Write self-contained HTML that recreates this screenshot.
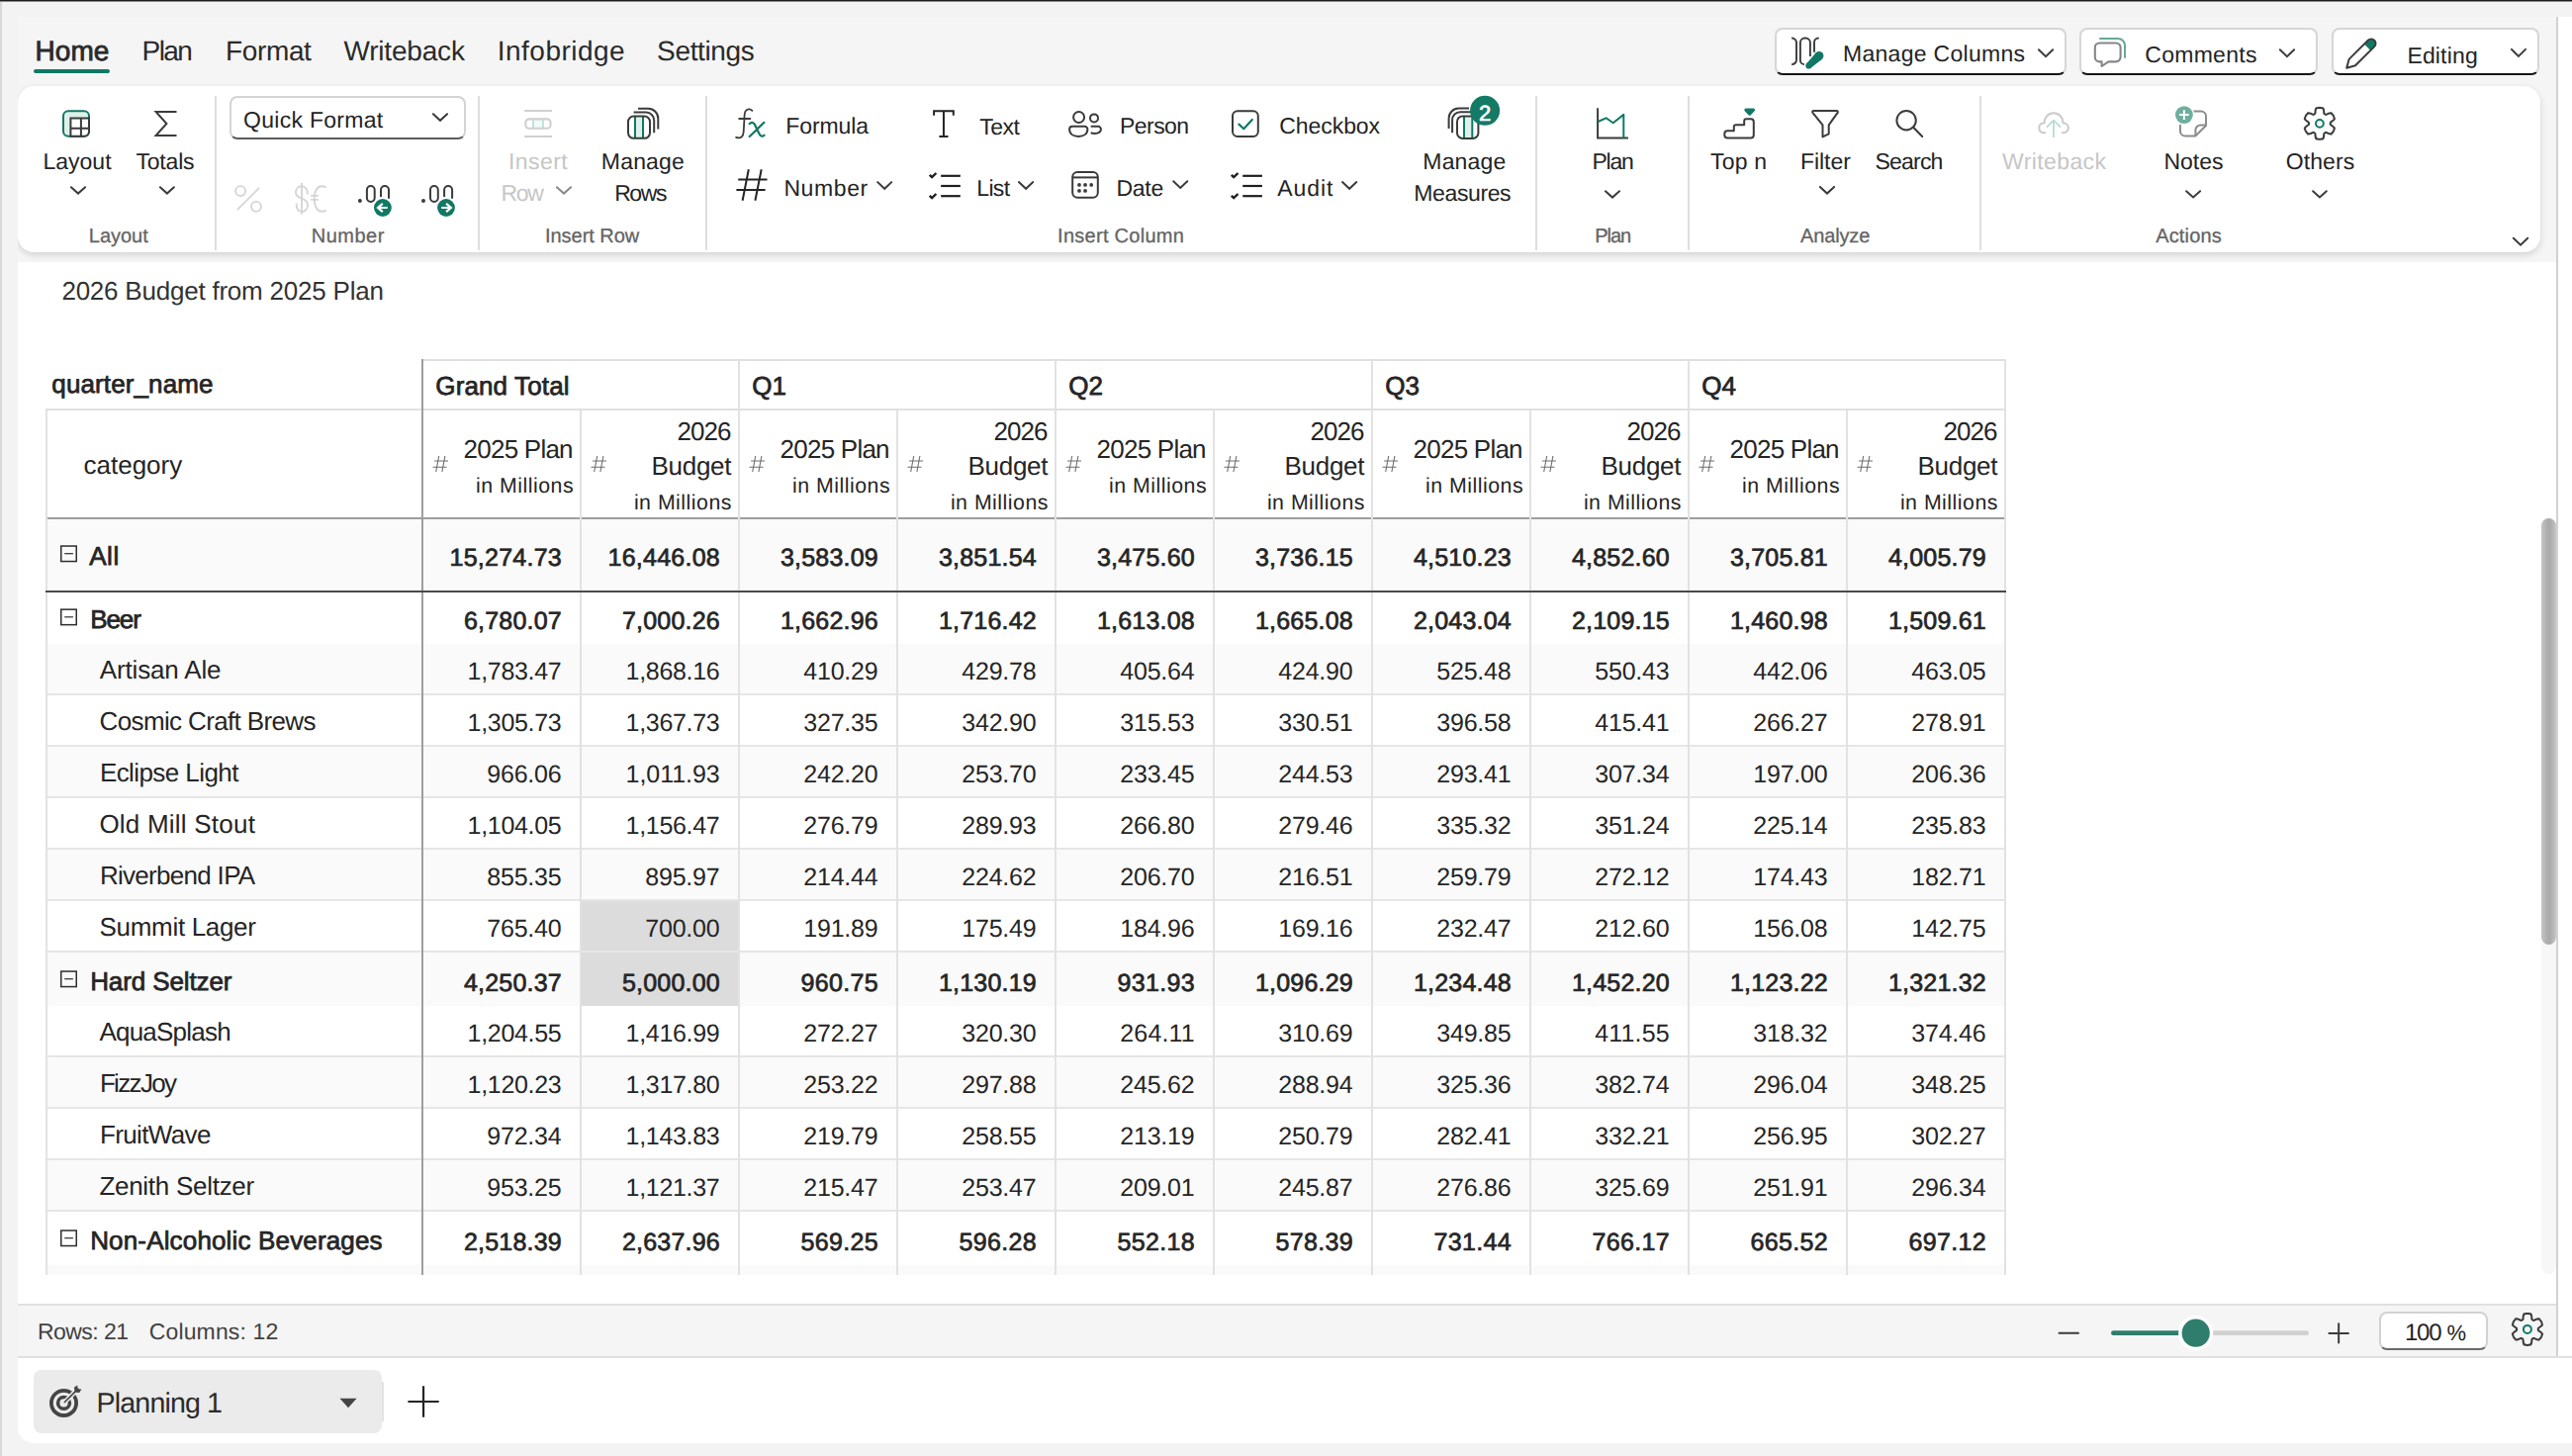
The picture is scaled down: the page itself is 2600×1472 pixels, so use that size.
<!DOCTYPE html>
<html lang="en"><head><meta charset="utf-8"><title>2026 Budget from 2025 Plan</title>
<style>
html,body{margin:0;padding:0}
body{width:2600px;height:1472px;overflow:hidden;position:relative;background:#f3f3f3;font-family:"Liberation Sans", sans-serif;text-rendering:geometricPrecision;}
#app div{position:absolute}
#app .t{white-space:pre}
#ico{position:absolute;left:0;top:0}
</style></head>
<body>
<div id="app">
<div style="left:0px;top:0px;width:2600px;height:2px;background:linear-gradient(#1f1f1f 0 1px,#8c8c8c 1px 2px)"></div>
<div style="left:0px;top:2px;width:2px;height:1470px;background:#d8d8d8"></div>
<div style="left:18px;top:17px;width:2566px;height:1355px;background:#f5f5f5"></div>
<div style="left:2586px;top:17px;width:14px;height:1442px;background:#fff"></div>
<div style="left:2584px;top:17px;width:2px;height:1355px;background:#d2d2d2"></div>
<div style="left:18px;top:265px;width:2566px;height:1053px;background:#fff"></div>
<div style="left:18px;top:1318px;width:2566px;height:54px;background:#f5f5f5;border-top:2px solid #e0e0e0;box-sizing:border-box"></div>
<div style="left:18px;top:1371px;width:2582px;height:2px;background:#e0e0e0"></div>
<div style="left:18px;top:1373px;width:2582px;height:86px;background:#fff;border-bottom-left-radius:16px"></div>
<div style="left:34px;top:70px;width:77px;height:4px;background:#117865;border-radius:2px"></div>
<div style="left:1794px;top:28px;width:295px;height:48px;background:#fff;border:2px solid #d6d6d6;border-bottom-color:#161616;border-radius:8px;box-sizing:border-box"></div>
<div style="left:2102px;top:28px;width:241px;height:48px;background:#fff;border:2px solid #d6d6d6;border-bottom-color:#161616;border-radius:8px;box-sizing:border-box"></div>
<div style="left:2357px;top:28px;width:210px;height:48px;background:#fff;border:2px solid #d6d6d6;border-bottom-color:#161616;border-radius:8px;box-sizing:border-box"></div>
<div style="left:18px;top:86.5px;width:2550px;height:168.5px;background:#fff;border-radius:16px;box-shadow:0 3px 7px rgba(0,0,0,.13),0 0 2px rgba(0,0,0,.06);clip-path:inset(-20px -20px -20px 0)"></div>
<div style="left:217px;top:97px;width:2px;height:156px;background:#dedede"></div>
<div style="left:483px;top:97px;width:2px;height:156px;background:#dedede"></div>
<div style="left:713px;top:97px;width:2px;height:156px;background:#dedede"></div>
<div style="left:1552px;top:97px;width:2px;height:156px;background:#dedede"></div>
<div style="left:1706px;top:97px;width:2px;height:156px;background:#dedede"></div>
<div style="left:2001px;top:97px;width:2px;height:156px;background:#dedede"></div>
<div style="left:231.5px;top:97px;width:239px;height:44px;background:#fff;border:2px solid #d4d4d4;border-bottom-color:#5c5c5c;border-radius:8px;box-sizing:border-box"></div>
<div style="left:48px;top:525px;width:1978px;height:72px;background:#fafafa"></div>
<div style="left:48px;top:651px;width:1978px;height:50px;background:#fafafa"></div>
<div style="left:48px;top:755px;width:1978px;height:50px;background:#fafafa"></div>
<div style="left:48px;top:859px;width:1978px;height:50px;background:#fafafa"></div>
<div style="left:48px;top:963px;width:1978px;height:54px;background:#fafafa"></div>
<div style="left:48px;top:1069px;width:1978px;height:50px;background:#fafafa"></div>
<div style="left:48px;top:1173px;width:1978px;height:50px;background:#fafafa"></div>
<div style="left:48px;top:1279px;width:1978px;height:9.5px;background:#fafafa"></div>
<div style="left:586px;top:911px;width:162px;height:50px;background:#dcdcdc"></div>
<div style="left:586px;top:961px;width:162px;height:56px;background:#dcdcdc"></div>
<div style="left:426px;top:363px;width:1602px;height:2px;background:#e0e0e0"></div>
<div style="left:46px;top:413px;width:1982px;height:2px;background:#e0e0e0"></div>
<div style="left:46px;top:523px;width:1982px;height:2px;background:#9e9e9e"></div>
<div style="left:48px;top:701px;width:1980px;height:2px;background:#e6e6e6"></div>
<div style="left:48px;top:753px;width:1980px;height:2px;background:#e6e6e6"></div>
<div style="left:48px;top:805px;width:1980px;height:2px;background:#e6e6e6"></div>
<div style="left:48px;top:857px;width:1980px;height:2px;background:#e6e6e6"></div>
<div style="left:48px;top:909px;width:1980px;height:2px;background:#e6e6e6"></div>
<div style="left:48px;top:961px;width:1980px;height:2px;background:#e6e6e6"></div>
<div style="left:48px;top:1067px;width:1980px;height:2px;background:#e6e6e6"></div>
<div style="left:48px;top:1119px;width:1980px;height:2px;background:#e6e6e6"></div>
<div style="left:48px;top:1171px;width:1980px;height:2px;background:#e6e6e6"></div>
<div style="left:48px;top:1223px;width:1980px;height:2px;background:#e6e6e6"></div>
<div style="left:46px;top:415px;width:2px;height:873.5px;background:#e2e2e2"></div>
<div style="left:586px;top:415px;width:2px;height:873.5px;background:#e2e2e2"></div>
<div style="left:746px;top:363px;width:2px;height:925.5px;background:#e2e2e2"></div>
<div style="left:906px;top:415px;width:2px;height:873.5px;background:#e2e2e2"></div>
<div style="left:1066px;top:363px;width:2px;height:925.5px;background:#e2e2e2"></div>
<div style="left:1226px;top:415px;width:2px;height:873.5px;background:#e2e2e2"></div>
<div style="left:1386px;top:363px;width:2px;height:925.5px;background:#e2e2e2"></div>
<div style="left:1546px;top:415px;width:2px;height:873.5px;background:#e2e2e2"></div>
<div style="left:1706px;top:363px;width:2px;height:925.5px;background:#e2e2e2"></div>
<div style="left:1866px;top:415px;width:2px;height:873.5px;background:#e2e2e2"></div>
<div style="left:2026px;top:363px;width:2px;height:925.5px;background:#e2e2e2"></div>
<div style="left:426px;top:363px;width:2px;height:925.5px;background:#9e9e9e"></div>
<div style="left:46px;top:597px;width:1982px;height:2px;background:#4a4a4a"></div>
<div style="left:2405px;top:1326px;width:110px;height:39px;background:#fff;border:2px solid #d2d2d2;border-bottom-color:#6a6a6a;border-radius:8px;box-sizing:border-box"></div>
<div style="left:34px;top:1385px;width:352px;height:64px;background:#ebebeb;border-radius:8px"></div>
<div style="left:386px;top:1397px;width:2px;height:40px;background:#e4e4e4"></div>
<div style="left:2569px;top:524px;width:15px;height:764px;background:#f7f7f7;border-radius:8px"></div>
<div style="left:2569px;top:524px;width:15px;height:431px;background:linear-gradient(90deg,#c4c4c4,#ababab 45%,#ababab 60%,#c6c6c6);border-radius:7.5px"></div>
<div class="t" style="left:35.40px;top:34.00px;font-size:28px;line-height:35px;color:#2a2a2a;letter-spacing:0.099px;-webkit-text-stroke:0.81px #2a2a2a;">Home</div>
<div class="t" style="left:143.50px;top:34.00px;font-size:28px;line-height:35px;color:#2a2a2a;letter-spacing:-1.549px;">Plan</div>
<div class="t" style="left:228.10px;top:34.00px;font-size:28px;line-height:35px;color:#2a2a2a;letter-spacing:-0.378px;">Format</div>
<div class="t" style="left:347.40px;top:34.00px;font-size:28px;line-height:35px;color:#2a2a2a;letter-spacing:-0.184px;">Writeback</div>
<div class="t" style="left:502.80px;top:34.00px;font-size:28px;line-height:35px;color:#2a2a2a;letter-spacing:0.473px;">Infobridge</div>
<div class="t" style="left:664.10px;top:34.00px;font-size:28px;line-height:35px;color:#2a2a2a;letter-spacing:-0.353px;">Settings</div>
<div class="t" style="left:1863.00px;top:39.00px;font-size:23px;line-height:30px;color:#242424;letter-spacing:0.287px;">Manage Columns</div>
<div class="t" style="left:2168.30px;top:40.15px;font-size:23px;line-height:30px;color:#242424;letter-spacing:0.271px;">Comments</div>
<div class="t" style="left:2433.40px;top:41.15px;font-size:23px;line-height:30px;color:#242424;letter-spacing:0.162px;">Editing</div>
<div class="t" style="left:43.40px;top:148.05px;font-size:23px;line-height:30px;color:#242424;letter-spacing:0.027px;">Layout</div>
<div class="t" style="left:137.40px;top:148.05px;font-size:23px;line-height:30px;color:#242424;letter-spacing:-0.179px;">Totals</div>
<div class="t" style="left:246.00px;top:106.05px;font-size:23px;line-height:30px;color:#242424;letter-spacing:0.288px;">Quick Format</div>
<div class="t" style="left:513.90px;top:148.05px;font-size:23px;line-height:30px;color:#c6c6c6;letter-spacing:0.454px;">Insert</div>
<div class="t" style="left:506.60px;top:180.10px;font-size:23px;line-height:30px;color:#c6c6c6;letter-spacing:-1.408px;">Row</div>
<div class="t" style="left:607.80px;top:148.05px;font-size:23px;line-height:30px;color:#242424;letter-spacing:0.195px;">Manage</div>
<div class="t" style="left:621.20px;top:180.10px;font-size:23px;line-height:30px;color:#242424;letter-spacing:-1.439px;">Rows</div>
<div class="t" style="left:794.30px;top:112.15px;font-size:23px;line-height:30px;color:#242424;letter-spacing:-0.110px;">Formula</div>
<div class="t" style="left:792.40px;top:175.20px;font-size:23px;line-height:30px;color:#242424;letter-spacing:0.617px;">Number</div>
<div class="t" style="left:990.30px;top:113.10px;font-size:23px;line-height:30px;color:#242424;letter-spacing:-0.529px;">Text</div>
<div class="t" style="left:987.30px;top:175.20px;font-size:23px;line-height:30px;color:#242424;letter-spacing:-0.666px;">List</div>
<div class="t" style="left:1132.00px;top:112.00px;font-size:23px;line-height:30px;color:#242424;letter-spacing:-0.555px;">Person</div>
<div class="t" style="left:1128.50px;top:175.10px;font-size:23px;line-height:30px;color:#242424;letter-spacing:-0.265px;">Date</div>
<div class="t" style="left:1293.30px;top:112.00px;font-size:23px;line-height:30px;color:#242424;letter-spacing:-0.069px;">Checkbox</div>
<div class="t" style="left:1291.30px;top:175.20px;font-size:23px;line-height:30px;color:#242424;letter-spacing:0.941px;">Audit</div>
<div class="t" style="left:1438.30px;top:148.10px;font-size:23px;line-height:30px;color:#242424;letter-spacing:0.175px;">Manage</div>
<div class="t" style="left:1429.30px;top:180.00px;font-size:23px;line-height:30px;color:#242424;letter-spacing:-0.383px;">Measures</div>
<div class="t" style="left:1609.50px;top:148.10px;font-size:23px;line-height:30px;color:#242424;letter-spacing:-1.249px;">Plan</div>
<div class="t" style="left:1729.00px;top:148.10px;font-size:23px;line-height:30px;color:#242424;letter-spacing:0.184px;">Top n</div>
<div class="t" style="left:1820.00px;top:148.10px;font-size:23px;line-height:30px;color:#242424;letter-spacing:-0.065px;">Filter</div>
<div class="t" style="left:1895.60px;top:148.10px;font-size:23px;line-height:30px;color:#242424;letter-spacing:-0.815px;">Search</div>
<div class="t" style="left:2024.10px;top:148.15px;font-size:23px;line-height:30px;color:#c6c6c6;letter-spacing:0.384px;">Writeback</div>
<div class="t" style="left:2187.40px;top:148.15px;font-size:23px;line-height:30px;color:#242424;letter-spacing:0.027px;">Notes</div>
<div class="t" style="left:2310.70px;top:148.15px;font-size:23px;line-height:30px;color:#242424;letter-spacing:0.094px;">Others</div>
<div class="t" style="left:89.80px;top:226.05px;font-size:20px;line-height:26px;color:#646464;letter-spacing:-0.012px;-webkit-text-stroke:0.30px #646464;">Layout</div>
<div class="t" style="left:314.80px;top:226.05px;font-size:20px;line-height:26px;color:#646464;letter-spacing:0.492px;-webkit-text-stroke:0.30px #646464;">Number</div>
<div class="t" style="left:551.00px;top:226.05px;font-size:20px;line-height:26px;color:#646464;letter-spacing:-0.033px;-webkit-text-stroke:0.30px #646464;">Insert Row</div>
<div class="t" style="left:1069.10px;top:226.05px;font-size:20px;line-height:26px;color:#646464;letter-spacing:0.275px;-webkit-text-stroke:0.30px #646464;">Insert Column</div>
<div class="t" style="left:1612.20px;top:226.05px;font-size:20px;line-height:26px;color:#646464;letter-spacing:-1.010px;-webkit-text-stroke:0.30px #646464;">Plan</div>
<div class="t" style="left:1820.00px;top:226.05px;font-size:20px;line-height:26px;color:#646464;letter-spacing:-0.143px;-webkit-text-stroke:0.30px #646464;">Analyze</div>
<div class="t" style="left:2179.20px;top:226.05px;font-size:20px;line-height:26px;color:#646464;letter-spacing:0.151px;-webkit-text-stroke:0.30px #646464;">Actions</div>
<div class="t" style="left:62.40px;top:277.15px;font-size:26px;line-height:34px;color:#333;letter-spacing:-0.221px;">2026 Budget from 2025 Plan</div>
<div class="t" style="left:52.30px;top:371.05px;font-size:26px;line-height:34px;color:#252525;letter-spacing:0.119px;-webkit-text-stroke:0.75px #252525;">quarter_name</div>
<div class="t" style="left:84.60px;top:452.50px;font-size:26px;line-height:34px;color:#252525;letter-spacing:-0.019px;">category</div>
<div class="t" style="left:440.30px;top:372.50px;font-size:26px;line-height:34px;color:#252525;letter-spacing:0.126px;-webkit-text-stroke:0.75px #252525;">Grand Total</div>
<div class="t" style="left:468.60px;top:437.05px;font-size:26px;line-height:34px;color:#252525;letter-spacing:-0.764px;">2025 Plan</div>
<div class="t" style="left:481.10px;top:477.20px;font-size:21.3px;line-height:28px;color:#252525;letter-spacing:0.500px;">in Millions</div>
<div class="t" style="left:684.40px;top:419.05px;font-size:26px;line-height:34px;color:#252525;letter-spacing:-0.948px;">2026</div>
<div class="t" style="left:658.60px;top:454.15px;font-size:26px;line-height:34px;color:#252525;letter-spacing:-0.321px;">Budget</div>
<div class="t" style="left:640.90px;top:494.20px;font-size:21.3px;line-height:28px;color:#252525;letter-spacing:0.500px;">in Millions</div>
<div class="t" style="left:760.30px;top:372.50px;font-size:26px;line-height:34px;color:#252525;-webkit-text-stroke:0.75px #252525;">Q1</div>
<div class="t" style="left:788.60px;top:437.05px;font-size:26px;line-height:34px;color:#252525;letter-spacing:-0.764px;">2025 Plan</div>
<div class="t" style="left:801.10px;top:477.20px;font-size:21.3px;line-height:28px;color:#252525;letter-spacing:0.500px;">in Millions</div>
<div class="t" style="left:1004.40px;top:419.05px;font-size:26px;line-height:34px;color:#252525;letter-spacing:-0.948px;">2026</div>
<div class="t" style="left:978.60px;top:454.15px;font-size:26px;line-height:34px;color:#252525;letter-spacing:-0.321px;">Budget</div>
<div class="t" style="left:960.90px;top:494.20px;font-size:21.3px;line-height:28px;color:#252525;letter-spacing:0.500px;">in Millions</div>
<div class="t" style="left:1080.30px;top:372.50px;font-size:26px;line-height:34px;color:#252525;-webkit-text-stroke:0.75px #252525;">Q2</div>
<div class="t" style="left:1108.60px;top:437.05px;font-size:26px;line-height:34px;color:#252525;letter-spacing:-0.764px;">2025 Plan</div>
<div class="t" style="left:1121.10px;top:477.20px;font-size:21.3px;line-height:28px;color:#252525;letter-spacing:0.500px;">in Millions</div>
<div class="t" style="left:1324.40px;top:419.05px;font-size:26px;line-height:34px;color:#252525;letter-spacing:-0.948px;">2026</div>
<div class="t" style="left:1298.60px;top:454.15px;font-size:26px;line-height:34px;color:#252525;letter-spacing:-0.321px;">Budget</div>
<div class="t" style="left:1280.90px;top:494.20px;font-size:21.3px;line-height:28px;color:#252525;letter-spacing:0.500px;">in Millions</div>
<div class="t" style="left:1400.30px;top:372.50px;font-size:26px;line-height:34px;color:#252525;-webkit-text-stroke:0.75px #252525;">Q3</div>
<div class="t" style="left:1428.60px;top:437.05px;font-size:26px;line-height:34px;color:#252525;letter-spacing:-0.764px;">2025 Plan</div>
<div class="t" style="left:1441.10px;top:477.20px;font-size:21.3px;line-height:28px;color:#252525;letter-spacing:0.500px;">in Millions</div>
<div class="t" style="left:1644.40px;top:419.05px;font-size:26px;line-height:34px;color:#252525;letter-spacing:-0.948px;">2026</div>
<div class="t" style="left:1618.60px;top:454.15px;font-size:26px;line-height:34px;color:#252525;letter-spacing:-0.321px;">Budget</div>
<div class="t" style="left:1600.90px;top:494.20px;font-size:21.3px;line-height:28px;color:#252525;letter-spacing:0.500px;">in Millions</div>
<div class="t" style="left:1720.30px;top:372.50px;font-size:26px;line-height:34px;color:#252525;-webkit-text-stroke:0.75px #252525;">Q4</div>
<div class="t" style="left:1748.60px;top:437.05px;font-size:26px;line-height:34px;color:#252525;letter-spacing:-0.764px;">2025 Plan</div>
<div class="t" style="left:1761.10px;top:477.20px;font-size:21.3px;line-height:28px;color:#252525;letter-spacing:0.500px;">in Millions</div>
<div class="t" style="left:1964.40px;top:419.05px;font-size:26px;line-height:34px;color:#252525;letter-spacing:-0.948px;">2026</div>
<div class="t" style="left:1938.60px;top:454.15px;font-size:26px;line-height:34px;color:#252525;letter-spacing:-0.321px;">Budget</div>
<div class="t" style="left:1920.90px;top:494.20px;font-size:21.3px;line-height:28px;color:#252525;letter-spacing:0.500px;">in Millions</div>
<div class="t" style="left:90.20px;top:545.15px;font-size:26px;line-height:34px;color:#252525;letter-spacing:0.547px;-webkit-text-stroke:0.75px #252525;">All</div>
<div class="t" style="left:454.55px;top:548.05px;font-size:25px;line-height:32px;color:#252525;letter-spacing:0.241px;-webkit-text-stroke:0.72px #252525;">15,274.73</div>
<div class="t" style="left:614.55px;top:548.05px;font-size:25px;line-height:32px;color:#252525;letter-spacing:0.241px;-webkit-text-stroke:0.72px #252525;">16,446.08</div>
<div class="t" style="left:789.00px;top:548.05px;font-size:25px;line-height:32px;color:#252525;letter-spacing:0.196px;-webkit-text-stroke:0.72px #252525;">3,583.09</div>
<div class="t" style="left:949.00px;top:548.05px;font-size:25px;line-height:32px;color:#252525;letter-spacing:0.196px;-webkit-text-stroke:0.72px #252525;">3,851.54</div>
<div class="t" style="left:1109.00px;top:548.05px;font-size:25px;line-height:32px;color:#252525;letter-spacing:0.196px;-webkit-text-stroke:0.72px #252525;">3,475.60</div>
<div class="t" style="left:1269.00px;top:548.05px;font-size:25px;line-height:32px;color:#252525;letter-spacing:0.196px;-webkit-text-stroke:0.72px #252525;">3,736.15</div>
<div class="t" style="left:1429.00px;top:548.05px;font-size:25px;line-height:32px;color:#252525;letter-spacing:0.196px;-webkit-text-stroke:0.72px #252525;">4,510.23</div>
<div class="t" style="left:1589.00px;top:548.05px;font-size:25px;line-height:32px;color:#252525;letter-spacing:0.196px;-webkit-text-stroke:0.72px #252525;">4,852.60</div>
<div class="t" style="left:1749.00px;top:548.05px;font-size:25px;line-height:32px;color:#252525;letter-spacing:0.196px;-webkit-text-stroke:0.72px #252525;">3,705.81</div>
<div class="t" style="left:1909.00px;top:548.05px;font-size:25px;line-height:32px;color:#252525;letter-spacing:0.196px;-webkit-text-stroke:0.72px #252525;">4,005.79</div>
<div class="t" style="left:91.20px;top:609.00px;font-size:26px;line-height:34px;color:#252525;letter-spacing:-1.107px;-webkit-text-stroke:0.75px #252525;">Beer</div>
<div class="t" style="left:469.00px;top:612.15px;font-size:25px;line-height:32px;color:#252525;letter-spacing:0.196px;-webkit-text-stroke:0.72px #252525;">6,780.07</div>
<div class="t" style="left:629.00px;top:612.15px;font-size:25px;line-height:32px;color:#252525;letter-spacing:0.196px;-webkit-text-stroke:0.72px #252525;">7,000.26</div>
<div class="t" style="left:789.00px;top:612.15px;font-size:25px;line-height:32px;color:#252525;letter-spacing:0.196px;-webkit-text-stroke:0.72px #252525;">1,662.96</div>
<div class="t" style="left:949.00px;top:612.15px;font-size:25px;line-height:32px;color:#252525;letter-spacing:0.196px;-webkit-text-stroke:0.72px #252525;">1,716.42</div>
<div class="t" style="left:1109.00px;top:612.15px;font-size:25px;line-height:32px;color:#252525;letter-spacing:0.196px;-webkit-text-stroke:0.72px #252525;">1,613.08</div>
<div class="t" style="left:1269.00px;top:612.15px;font-size:25px;line-height:32px;color:#252525;letter-spacing:0.196px;-webkit-text-stroke:0.72px #252525;">1,665.08</div>
<div class="t" style="left:1429.00px;top:612.15px;font-size:25px;line-height:32px;color:#252525;letter-spacing:0.196px;-webkit-text-stroke:0.72px #252525;">2,043.04</div>
<div class="t" style="left:1589.00px;top:612.15px;font-size:25px;line-height:32px;color:#252525;letter-spacing:0.196px;-webkit-text-stroke:0.72px #252525;">2,109.15</div>
<div class="t" style="left:1749.00px;top:612.15px;font-size:25px;line-height:32px;color:#252525;letter-spacing:0.196px;-webkit-text-stroke:0.72px #252525;">1,460.98</div>
<div class="t" style="left:1909.00px;top:612.15px;font-size:25px;line-height:32px;color:#252525;letter-spacing:0.196px;-webkit-text-stroke:0.72px #252525;">1,509.61</div>
<div class="t" style="left:100.70px;top:660.00px;font-size:26px;line-height:34px;color:#252525;letter-spacing:-0.140px;">Artisan Ale</div>
<div class="t" style="left:472.60px;top:663.15px;font-size:25px;line-height:32px;color:#252525;letter-spacing:-0.318px;">1,783.47</div>
<div class="t" style="left:632.60px;top:663.15px;font-size:25px;line-height:32px;color:#252525;letter-spacing:-0.318px;">1,868.16</div>
<div class="t" style="left:812.25px;top:663.15px;font-size:25px;line-height:32px;color:#252525;letter-spacing:-0.204px;">410.29</div>
<div class="t" style="left:972.25px;top:663.15px;font-size:25px;line-height:32px;color:#252525;letter-spacing:-0.204px;">429.78</div>
<div class="t" style="left:1132.25px;top:663.15px;font-size:25px;line-height:32px;color:#252525;letter-spacing:-0.204px;">405.64</div>
<div class="t" style="left:1292.25px;top:663.15px;font-size:25px;line-height:32px;color:#252525;letter-spacing:-0.204px;">424.90</div>
<div class="t" style="left:1452.25px;top:663.15px;font-size:25px;line-height:32px;color:#252525;letter-spacing:-0.204px;">525.48</div>
<div class="t" style="left:1612.25px;top:663.15px;font-size:25px;line-height:32px;color:#252525;letter-spacing:-0.204px;">550.43</div>
<div class="t" style="left:1772.25px;top:663.15px;font-size:25px;line-height:32px;color:#252525;letter-spacing:-0.204px;">442.06</div>
<div class="t" style="left:1932.25px;top:663.15px;font-size:25px;line-height:32px;color:#252525;letter-spacing:-0.204px;">463.05</div>
<div class="t" style="left:100.60px;top:712.00px;font-size:26px;line-height:34px;color:#252525;letter-spacing:-0.635px;">Cosmic Craft Brews</div>
<div class="t" style="left:472.60px;top:715.15px;font-size:25px;line-height:32px;color:#252525;letter-spacing:-0.318px;">1,305.73</div>
<div class="t" style="left:632.60px;top:715.15px;font-size:25px;line-height:32px;color:#252525;letter-spacing:-0.318px;">1,367.73</div>
<div class="t" style="left:812.25px;top:715.15px;font-size:25px;line-height:32px;color:#252525;letter-spacing:-0.204px;">327.35</div>
<div class="t" style="left:972.25px;top:715.15px;font-size:25px;line-height:32px;color:#252525;letter-spacing:-0.204px;">342.90</div>
<div class="t" style="left:1132.25px;top:715.15px;font-size:25px;line-height:32px;color:#252525;letter-spacing:-0.204px;">315.53</div>
<div class="t" style="left:1292.25px;top:715.15px;font-size:25px;line-height:32px;color:#252525;letter-spacing:-0.204px;">330.51</div>
<div class="t" style="left:1452.25px;top:715.15px;font-size:25px;line-height:32px;color:#252525;letter-spacing:-0.204px;">396.58</div>
<div class="t" style="left:1612.25px;top:715.15px;font-size:25px;line-height:32px;color:#252525;letter-spacing:-0.204px;">415.41</div>
<div class="t" style="left:1772.25px;top:715.15px;font-size:25px;line-height:32px;color:#252525;letter-spacing:-0.204px;">266.27</div>
<div class="t" style="left:1932.25px;top:715.15px;font-size:25px;line-height:32px;color:#252525;letter-spacing:-0.204px;">278.91</div>
<div class="t" style="left:100.90px;top:764.00px;font-size:26px;line-height:34px;color:#252525;letter-spacing:-0.577px;">Eclipse Light</div>
<div class="t" style="left:492.25px;top:767.15px;font-size:25px;line-height:32px;color:#252525;letter-spacing:-0.204px;">966.06</div>
<div class="t" style="left:632.60px;top:767.15px;font-size:25px;line-height:32px;color:#252525;letter-spacing:-0.053px;">1,011.93</div>
<div class="t" style="left:812.25px;top:767.15px;font-size:25px;line-height:32px;color:#252525;letter-spacing:-0.204px;">242.20</div>
<div class="t" style="left:972.25px;top:767.15px;font-size:25px;line-height:32px;color:#252525;letter-spacing:-0.204px;">253.70</div>
<div class="t" style="left:1132.25px;top:767.15px;font-size:25px;line-height:32px;color:#252525;letter-spacing:-0.204px;">233.45</div>
<div class="t" style="left:1292.25px;top:767.15px;font-size:25px;line-height:32px;color:#252525;letter-spacing:-0.204px;">244.53</div>
<div class="t" style="left:1452.25px;top:767.15px;font-size:25px;line-height:32px;color:#252525;letter-spacing:-0.204px;">293.41</div>
<div class="t" style="left:1612.25px;top:767.15px;font-size:25px;line-height:32px;color:#252525;letter-spacing:-0.204px;">307.34</div>
<div class="t" style="left:1772.25px;top:767.15px;font-size:25px;line-height:32px;color:#252525;letter-spacing:-0.204px;">197.00</div>
<div class="t" style="left:1932.25px;top:767.15px;font-size:25px;line-height:32px;color:#252525;letter-spacing:-0.204px;">206.36</div>
<div class="t" style="left:100.40px;top:816.00px;font-size:26px;line-height:34px;color:#252525;letter-spacing:0.222px;">Old Mill Stout</div>
<div class="t" style="left:472.60px;top:819.15px;font-size:25px;line-height:32px;color:#252525;letter-spacing:-0.318px;">1,104.05</div>
<div class="t" style="left:632.60px;top:819.15px;font-size:25px;line-height:32px;color:#252525;letter-spacing:-0.318px;">1,156.47</div>
<div class="t" style="left:812.25px;top:819.15px;font-size:25px;line-height:32px;color:#252525;letter-spacing:-0.204px;">276.79</div>
<div class="t" style="left:972.25px;top:819.15px;font-size:25px;line-height:32px;color:#252525;letter-spacing:-0.204px;">289.93</div>
<div class="t" style="left:1132.25px;top:819.15px;font-size:25px;line-height:32px;color:#252525;letter-spacing:-0.204px;">266.80</div>
<div class="t" style="left:1292.25px;top:819.15px;font-size:25px;line-height:32px;color:#252525;letter-spacing:-0.204px;">279.46</div>
<div class="t" style="left:1452.25px;top:819.15px;font-size:25px;line-height:32px;color:#252525;letter-spacing:-0.204px;">335.32</div>
<div class="t" style="left:1612.25px;top:819.15px;font-size:25px;line-height:32px;color:#252525;letter-spacing:-0.204px;">351.24</div>
<div class="t" style="left:1772.25px;top:819.15px;font-size:25px;line-height:32px;color:#252525;letter-spacing:-0.204px;">225.14</div>
<div class="t" style="left:1932.25px;top:819.15px;font-size:25px;line-height:32px;color:#252525;letter-spacing:-0.204px;">235.83</div>
<div class="t" style="left:100.90px;top:868.00px;font-size:26px;line-height:34px;color:#252525;letter-spacing:-0.702px;">Riverbend IPA</div>
<div class="t" style="left:492.25px;top:871.15px;font-size:25px;line-height:32px;color:#252525;letter-spacing:-0.204px;">855.35</div>
<div class="t" style="left:652.25px;top:871.15px;font-size:25px;line-height:32px;color:#252525;letter-spacing:-0.204px;">895.97</div>
<div class="t" style="left:812.25px;top:871.15px;font-size:25px;line-height:32px;color:#252525;letter-spacing:-0.204px;">214.44</div>
<div class="t" style="left:972.25px;top:871.15px;font-size:25px;line-height:32px;color:#252525;letter-spacing:-0.204px;">224.62</div>
<div class="t" style="left:1132.25px;top:871.15px;font-size:25px;line-height:32px;color:#252525;letter-spacing:-0.204px;">206.70</div>
<div class="t" style="left:1292.25px;top:871.15px;font-size:25px;line-height:32px;color:#252525;letter-spacing:-0.204px;">216.51</div>
<div class="t" style="left:1452.25px;top:871.15px;font-size:25px;line-height:32px;color:#252525;letter-spacing:-0.204px;">259.79</div>
<div class="t" style="left:1612.25px;top:871.15px;font-size:25px;line-height:32px;color:#252525;letter-spacing:-0.204px;">272.12</div>
<div class="t" style="left:1772.25px;top:871.15px;font-size:25px;line-height:32px;color:#252525;letter-spacing:-0.204px;">174.43</div>
<div class="t" style="left:1932.25px;top:871.15px;font-size:25px;line-height:32px;color:#252525;letter-spacing:-0.204px;">182.71</div>
<div class="t" style="left:100.60px;top:920.00px;font-size:26px;line-height:34px;color:#252525;letter-spacing:-0.322px;">Summit Lager</div>
<div class="t" style="left:492.25px;top:923.15px;font-size:25px;line-height:32px;color:#252525;letter-spacing:-0.204px;">765.40</div>
<div class="t" style="left:652.25px;top:923.15px;font-size:25px;line-height:32px;color:#252525;letter-spacing:-0.204px;">700.00</div>
<div class="t" style="left:812.25px;top:923.15px;font-size:25px;line-height:32px;color:#252525;letter-spacing:-0.204px;">191.89</div>
<div class="t" style="left:972.25px;top:923.15px;font-size:25px;line-height:32px;color:#252525;letter-spacing:-0.204px;">175.49</div>
<div class="t" style="left:1132.25px;top:923.15px;font-size:25px;line-height:32px;color:#252525;letter-spacing:-0.204px;">184.96</div>
<div class="t" style="left:1292.25px;top:923.15px;font-size:25px;line-height:32px;color:#252525;letter-spacing:-0.204px;">169.16</div>
<div class="t" style="left:1452.25px;top:923.15px;font-size:25px;line-height:32px;color:#252525;letter-spacing:-0.204px;">232.47</div>
<div class="t" style="left:1612.25px;top:923.15px;font-size:25px;line-height:32px;color:#252525;letter-spacing:-0.204px;">212.60</div>
<div class="t" style="left:1772.25px;top:923.15px;font-size:25px;line-height:32px;color:#252525;letter-spacing:-0.204px;">156.08</div>
<div class="t" style="left:1932.25px;top:923.15px;font-size:25px;line-height:32px;color:#252525;letter-spacing:-0.204px;">142.75</div>
<div class="t" style="left:91.20px;top:975.15px;font-size:26px;line-height:34px;color:#252525;letter-spacing:-0.118px;-webkit-text-stroke:0.75px #252525;">Hard Seltzer</div>
<div class="t" style="left:469.00px;top:978.05px;font-size:25px;line-height:32px;color:#252525;letter-spacing:0.196px;-webkit-text-stroke:0.72px #252525;">4,250.37</div>
<div class="t" style="left:629.00px;top:978.05px;font-size:25px;line-height:32px;color:#252525;letter-spacing:0.196px;-webkit-text-stroke:0.72px #252525;">5,000.00</div>
<div class="t" style="left:809.45px;top:978.05px;font-size:25px;line-height:32px;color:#252525;letter-spacing:0.356px;-webkit-text-stroke:0.72px #252525;">960.75</div>
<div class="t" style="left:949.00px;top:978.05px;font-size:25px;line-height:32px;color:#252525;letter-spacing:0.196px;-webkit-text-stroke:0.72px #252525;">1,130.19</div>
<div class="t" style="left:1129.45px;top:978.05px;font-size:25px;line-height:32px;color:#252525;letter-spacing:0.356px;-webkit-text-stroke:0.72px #252525;">931.93</div>
<div class="t" style="left:1269.00px;top:978.05px;font-size:25px;line-height:32px;color:#252525;letter-spacing:0.196px;-webkit-text-stroke:0.72px #252525;">1,096.29</div>
<div class="t" style="left:1429.00px;top:978.05px;font-size:25px;line-height:32px;color:#252525;letter-spacing:0.196px;-webkit-text-stroke:0.72px #252525;">1,234.48</div>
<div class="t" style="left:1589.00px;top:978.05px;font-size:25px;line-height:32px;color:#252525;letter-spacing:0.196px;-webkit-text-stroke:0.72px #252525;">1,452.20</div>
<div class="t" style="left:1749.00px;top:978.05px;font-size:25px;line-height:32px;color:#252525;letter-spacing:0.196px;-webkit-text-stroke:0.72px #252525;">1,123.22</div>
<div class="t" style="left:1909.00px;top:978.05px;font-size:25px;line-height:32px;color:#252525;letter-spacing:0.196px;-webkit-text-stroke:0.72px #252525;">1,321.32</div>
<div class="t" style="left:100.40px;top:1026.00px;font-size:26px;line-height:34px;color:#252525;letter-spacing:-0.770px;">AquaSplash</div>
<div class="t" style="left:472.60px;top:1029.15px;font-size:25px;line-height:32px;color:#252525;letter-spacing:-0.318px;">1,204.55</div>
<div class="t" style="left:632.60px;top:1029.15px;font-size:25px;line-height:32px;color:#252525;letter-spacing:-0.318px;">1,416.99</div>
<div class="t" style="left:812.25px;top:1029.15px;font-size:25px;line-height:32px;color:#252525;letter-spacing:-0.204px;">272.27</div>
<div class="t" style="left:972.25px;top:1029.15px;font-size:25px;line-height:32px;color:#252525;letter-spacing:-0.204px;">320.30</div>
<div class="t" style="left:1132.25px;top:1029.15px;font-size:25px;line-height:32px;color:#252525;letter-spacing:0.168px;">264.11</div>
<div class="t" style="left:1292.25px;top:1029.15px;font-size:25px;line-height:32px;color:#252525;letter-spacing:-0.204px;">310.69</div>
<div class="t" style="left:1452.25px;top:1029.15px;font-size:25px;line-height:32px;color:#252525;letter-spacing:-0.204px;">349.85</div>
<div class="t" style="left:1612.25px;top:1029.15px;font-size:25px;line-height:32px;color:#252525;letter-spacing:0.168px;">411.55</div>
<div class="t" style="left:1772.25px;top:1029.15px;font-size:25px;line-height:32px;color:#252525;letter-spacing:-0.204px;">318.32</div>
<div class="t" style="left:1932.25px;top:1029.15px;font-size:25px;line-height:32px;color:#252525;letter-spacing:-0.204px;">374.46</div>
<div class="t" style="left:100.90px;top:1078.00px;font-size:26px;line-height:34px;color:#252525;letter-spacing:-1.654px;">FizzJoy</div>
<div class="t" style="left:472.60px;top:1081.15px;font-size:25px;line-height:32px;color:#252525;letter-spacing:-0.318px;">1,120.23</div>
<div class="t" style="left:632.60px;top:1081.15px;font-size:25px;line-height:32px;color:#252525;letter-spacing:-0.318px;">1,317.80</div>
<div class="t" style="left:812.25px;top:1081.15px;font-size:25px;line-height:32px;color:#252525;letter-spacing:-0.204px;">253.22</div>
<div class="t" style="left:972.25px;top:1081.15px;font-size:25px;line-height:32px;color:#252525;letter-spacing:-0.204px;">297.88</div>
<div class="t" style="left:1132.25px;top:1081.15px;font-size:25px;line-height:32px;color:#252525;letter-spacing:-0.204px;">245.62</div>
<div class="t" style="left:1292.25px;top:1081.15px;font-size:25px;line-height:32px;color:#252525;letter-spacing:-0.204px;">288.94</div>
<div class="t" style="left:1452.25px;top:1081.15px;font-size:25px;line-height:32px;color:#252525;letter-spacing:-0.204px;">325.36</div>
<div class="t" style="left:1612.25px;top:1081.15px;font-size:25px;line-height:32px;color:#252525;letter-spacing:-0.204px;">382.74</div>
<div class="t" style="left:1772.25px;top:1081.15px;font-size:25px;line-height:32px;color:#252525;letter-spacing:-0.204px;">296.04</div>
<div class="t" style="left:1932.25px;top:1081.15px;font-size:25px;line-height:32px;color:#252525;letter-spacing:-0.204px;">348.25</div>
<div class="t" style="left:100.90px;top:1130.00px;font-size:26px;line-height:34px;color:#252525;letter-spacing:-0.625px;">FruitWave</div>
<div class="t" style="left:492.25px;top:1133.15px;font-size:25px;line-height:32px;color:#252525;letter-spacing:-0.204px;">972.34</div>
<div class="t" style="left:632.60px;top:1133.15px;font-size:25px;line-height:32px;color:#252525;letter-spacing:-0.318px;">1,143.83</div>
<div class="t" style="left:812.25px;top:1133.15px;font-size:25px;line-height:32px;color:#252525;letter-spacing:-0.204px;">219.79</div>
<div class="t" style="left:972.25px;top:1133.15px;font-size:25px;line-height:32px;color:#252525;letter-spacing:-0.204px;">258.55</div>
<div class="t" style="left:1132.25px;top:1133.15px;font-size:25px;line-height:32px;color:#252525;letter-spacing:-0.204px;">213.19</div>
<div class="t" style="left:1292.25px;top:1133.15px;font-size:25px;line-height:32px;color:#252525;letter-spacing:-0.204px;">250.79</div>
<div class="t" style="left:1452.25px;top:1133.15px;font-size:25px;line-height:32px;color:#252525;letter-spacing:-0.204px;">282.41</div>
<div class="t" style="left:1612.25px;top:1133.15px;font-size:25px;line-height:32px;color:#252525;letter-spacing:-0.204px;">332.21</div>
<div class="t" style="left:1772.25px;top:1133.15px;font-size:25px;line-height:32px;color:#252525;letter-spacing:-0.204px;">256.95</div>
<div class="t" style="left:1932.25px;top:1133.15px;font-size:25px;line-height:32px;color:#252525;letter-spacing:-0.204px;">302.27</div>
<div class="t" style="left:100.40px;top:1182.00px;font-size:26px;line-height:34px;color:#252525;letter-spacing:-0.277px;">Zenith Seltzer</div>
<div class="t" style="left:492.25px;top:1185.15px;font-size:25px;line-height:32px;color:#252525;letter-spacing:-0.204px;">953.25</div>
<div class="t" style="left:632.60px;top:1185.15px;font-size:25px;line-height:32px;color:#252525;letter-spacing:-0.318px;">1,121.37</div>
<div class="t" style="left:812.25px;top:1185.15px;font-size:25px;line-height:32px;color:#252525;letter-spacing:-0.204px;">215.47</div>
<div class="t" style="left:972.25px;top:1185.15px;font-size:25px;line-height:32px;color:#252525;letter-spacing:-0.204px;">253.47</div>
<div class="t" style="left:1132.25px;top:1185.15px;font-size:25px;line-height:32px;color:#252525;letter-spacing:-0.204px;">209.01</div>
<div class="t" style="left:1292.25px;top:1185.15px;font-size:25px;line-height:32px;color:#252525;letter-spacing:-0.204px;">245.87</div>
<div class="t" style="left:1452.25px;top:1185.15px;font-size:25px;line-height:32px;color:#252525;letter-spacing:-0.204px;">276.86</div>
<div class="t" style="left:1612.25px;top:1185.15px;font-size:25px;line-height:32px;color:#252525;letter-spacing:-0.204px;">325.69</div>
<div class="t" style="left:1772.25px;top:1185.15px;font-size:25px;line-height:32px;color:#252525;letter-spacing:-0.204px;">251.91</div>
<div class="t" style="left:1932.25px;top:1185.15px;font-size:25px;line-height:32px;color:#252525;letter-spacing:-0.204px;">296.34</div>
<div class="t" style="left:91.20px;top:1237.15px;font-size:26px;line-height:34px;color:#252525;letter-spacing:0.157px;-webkit-text-stroke:0.75px #252525;">Non-Alcoholic Beverages</div>
<div class="t" style="left:469.00px;top:1240.05px;font-size:25px;line-height:32px;color:#252525;letter-spacing:0.196px;-webkit-text-stroke:0.72px #252525;">2,518.39</div>
<div class="t" style="left:629.00px;top:1240.05px;font-size:25px;line-height:32px;color:#252525;letter-spacing:0.196px;-webkit-text-stroke:0.72px #252525;">2,637.96</div>
<div class="t" style="left:809.45px;top:1240.05px;font-size:25px;line-height:32px;color:#252525;letter-spacing:0.356px;-webkit-text-stroke:0.72px #252525;">569.25</div>
<div class="t" style="left:969.45px;top:1240.05px;font-size:25px;line-height:32px;color:#252525;letter-spacing:0.356px;-webkit-text-stroke:0.72px #252525;">596.28</div>
<div class="t" style="left:1129.45px;top:1240.05px;font-size:25px;line-height:32px;color:#252525;letter-spacing:0.356px;-webkit-text-stroke:0.72px #252525;">552.18</div>
<div class="t" style="left:1289.45px;top:1240.05px;font-size:25px;line-height:32px;color:#252525;letter-spacing:0.356px;-webkit-text-stroke:0.72px #252525;">578.39</div>
<div class="t" style="left:1449.45px;top:1240.05px;font-size:25px;line-height:32px;color:#252525;letter-spacing:0.356px;-webkit-text-stroke:0.72px #252525;">731.44</div>
<div class="t" style="left:1609.45px;top:1240.05px;font-size:25px;line-height:32px;color:#252525;letter-spacing:0.356px;-webkit-text-stroke:0.72px #252525;">766.17</div>
<div class="t" style="left:1769.45px;top:1240.05px;font-size:25px;line-height:32px;color:#252525;letter-spacing:0.356px;-webkit-text-stroke:0.72px #252525;">665.52</div>
<div class="t" style="left:1929.45px;top:1240.05px;font-size:25px;line-height:32px;color:#252525;letter-spacing:0.356px;-webkit-text-stroke:0.72px #252525;">697.12</div>
<div class="t" style="left:38.00px;top:1331.05px;font-size:23px;line-height:30px;color:#424242;letter-spacing:-0.554px;">Rows: 21</div>
<div class="t" style="left:150.80px;top:1331.05px;font-size:23px;line-height:30px;color:#424242;letter-spacing:0.127px;">Columns: 12</div>
<div class="t" style="left:2431.00px;top:1332.00px;font-size:24px;line-height:31px;color:#242424;letter-spacing:-1.273px;">100</div>
<div class="t" style="left:2473.40px;top:1333.00px;font-size:22px;line-height:29px;color:#242424;">%</div>
<div class="t" style="left:97.60px;top:1401.05px;font-size:28.6px;line-height:36px;color:#2b2b2b;letter-spacing:-0.860px;">Planning 1</div>
</div>
<svg id="ico" width="2600" height="1472" viewBox="0 0 2600 1472">
<path d="M2060.90 50.20L2068.05 57.10L2075.20 50.20" fill="none" stroke="#3b3b3b" stroke-width="2" stroke-linecap="round" stroke-linejoin="miter"/>
<path d="M2304.80 50.20L2311.95 57.10L2319.10 50.20" fill="none" stroke="#3b3b3b" stroke-width="2" stroke-linecap="round" stroke-linejoin="miter"/>
<path d="M2538.90 49.90L2545.95 56.90L2553.00 49.90" fill="none" stroke="#3b3b3b" stroke-width="2" stroke-linecap="round" stroke-linejoin="miter"/>
<path d="M71.90 189.20L79.00 195.60L86.10 189.20" fill="none" stroke="#3b3b3b" stroke-width="2" stroke-linecap="round" stroke-linejoin="miter"/>
<path d="M161.90 189.20L168.90 195.60L175.90 189.20" fill="none" stroke="#3b3b3b" stroke-width="2" stroke-linecap="round" stroke-linejoin="miter"/>
<path d="M437.90 115.20L445.00 121.80L452.10 115.20" fill="none" stroke="#3b3b3b" stroke-width="2" stroke-linecap="round" stroke-linejoin="miter"/>
<path d="M562.90 189.20L570.00 195.60L577.10 189.20" fill="none" stroke="#8a8a8a" stroke-width="2" stroke-linecap="round" stroke-linejoin="miter"/>
<path d="M887.20 184.10L894.25 190.80L901.30 184.10" fill="none" stroke="#3b3b3b" stroke-width="2" stroke-linecap="round" stroke-linejoin="miter"/>
<path d="M1029.90 184.10L1037.10 190.80L1044.30 184.10" fill="none" stroke="#3b3b3b" stroke-width="2" stroke-linecap="round" stroke-linejoin="miter"/>
<path d="M1186.20 183.20L1193.25 189.90L1200.30 183.20" fill="none" stroke="#3b3b3b" stroke-width="2" stroke-linecap="round" stroke-linejoin="miter"/>
<path d="M1357.00 184.10L1364.15 190.80L1371.30 184.10" fill="none" stroke="#3b3b3b" stroke-width="2" stroke-linecap="round" stroke-linejoin="miter"/>
<path d="M1622.90 193.30L1630.00 199.60L1637.10 193.30" fill="none" stroke="#3b3b3b" stroke-width="2" stroke-linecap="round" stroke-linejoin="miter"/>
<path d="M1839.90 188.90L1847.00 195.60L1854.10 188.90" fill="none" stroke="#3b3b3b" stroke-width="2" stroke-linecap="round" stroke-linejoin="miter"/>
<path d="M2210.10 193.20L2217.10 199.50L2224.10 193.20" fill="none" stroke="#3b3b3b" stroke-width="2" stroke-linecap="round" stroke-linejoin="miter"/>
<path d="M2338.10 193.20L2344.95 199.50L2351.80 193.20" fill="none" stroke="#3b3b3b" stroke-width="2" stroke-linecap="round" stroke-linejoin="miter"/>
<path d="M2540.80 240.70L2548.00 247.70L2555.20 240.70" fill="none" stroke="#3b3b3b" stroke-width="2" stroke-linecap="round" stroke-linejoin="miter"/>
<g stroke="#6e6e6e" stroke-width="1.1" fill="none"><path d="M443.7 461L440.7 477M449.9 461L446.9 477M439.1 466H453.0M437.5 472.2H451.5"/></g>
<g stroke="#6e6e6e" stroke-width="1.1" fill="none"><path d="M603.7 461L600.7 477M609.9 461L606.9 477M599.1 466H613.0M597.5 472.2H611.5"/></g>
<g stroke="#6e6e6e" stroke-width="1.1" fill="none"><path d="M763.7 461L760.7 477M769.9 461L766.9 477M759.1 466H773.0M757.5 472.2H771.5"/></g>
<g stroke="#6e6e6e" stroke-width="1.1" fill="none"><path d="M923.7 461L920.7 477M929.9 461L926.9 477M919.1 466H933.0M917.5 472.2H931.5"/></g>
<g stroke="#6e6e6e" stroke-width="1.1" fill="none"><path d="M1083.7 461L1080.7 477M1089.9 461L1086.9 477M1079.1 466H1093.0M1077.5 472.2H1091.5"/></g>
<g stroke="#6e6e6e" stroke-width="1.1" fill="none"><path d="M1243.7 461L1240.7 477M1249.9 461L1246.9 477M1239.1 466H1253.0M1237.5 472.2H1251.5"/></g>
<g stroke="#6e6e6e" stroke-width="1.1" fill="none"><path d="M1403.7 461L1400.7 477M1409.9 461L1406.9 477M1399.1 466H1413.0M1397.5 472.2H1411.5"/></g>
<g stroke="#6e6e6e" stroke-width="1.1" fill="none"><path d="M1563.7 461L1560.7 477M1569.9 461L1566.9 477M1559.1 466H1573.0M1557.5 472.2H1571.5"/></g>
<g stroke="#6e6e6e" stroke-width="1.1" fill="none"><path d="M1723.7 461L1720.7 477M1729.9 461L1726.9 477M1719.1 466H1733.0M1717.5 472.2H1731.5"/></g>
<g stroke="#6e6e6e" stroke-width="1.1" fill="none"><path d="M1883.7 461L1880.7 477M1889.9 461L1886.9 477M1879.1 466H1893.0M1877.5 472.2H1891.5"/></g>
<rect x="61.75" y="552.05" width="15.5" height="15.5" fill="none" stroke="#2e2e2e" stroke-width="1.5"/>
<path d="M65.2 559.6999999999999H73.9" stroke="#2e2e2e" stroke-width="1.2" fill="none"/>
<rect x="61.75" y="616.15" width="15.5" height="15.5" fill="none" stroke="#2e2e2e" stroke-width="1.5"/>
<path d="M65.2 623.8H73.9" stroke="#2e2e2e" stroke-width="1.2" fill="none"/>
<rect x="61.75" y="982.05" width="15.5" height="15.5" fill="none" stroke="#2e2e2e" stroke-width="1.5"/>
<path d="M65.2 989.6999999999999H73.9" stroke="#2e2e2e" stroke-width="1.2" fill="none"/>
<rect x="61.75" y="1244.0500000000002" width="15.5" height="15.5" fill="none" stroke="#2e2e2e" stroke-width="1.5"/>
<path d="M65.2 1251.7000000000003H73.9" stroke="#2e2e2e" stroke-width="1.2" fill="none"/>
<path d="M2081.5 1347.7H2101" stroke="#3b3b3b" stroke-width="2" stroke-linecap="round"/>
<path d="M2136.4 1347.7H2220" stroke="#2f7d6d" stroke-width="4.7" stroke-linecap="round"/>
<path d="M2220 1347.7H2331.6" stroke="#d1d1d1" stroke-width="4.7" stroke-linecap="round"/>
<circle cx="2219.7" cy="1347.7" r="17.6" fill="#fff"/><circle cx="2219.7" cy="1347.7" r="14.1" fill="#2f7d6d"/>
<path d="M2354.4 1347.9H2373.9M2364.15 1338.2V1357.6" stroke="#3b3b3b" stroke-width="2" stroke-linecap="round"/>
<path d="M343.5 1413.8H360.6L352.05 1423.3Z" fill="#454545"/>
<path d="M412.4 1417H443.7M428.05 1401.2V1432.8" stroke="#242424" stroke-width="2.2" fill="none"/>
<rect x="64" y="112.3" width="26" height="25.5" rx="5" fill="#dff0eb" stroke="#117865" stroke-width="2"/>
<path d="M71.4 137.8V119.6H90V132.8a5 5 0 0 1-5 5Z" fill="#fff" stroke="#3b3b3b" stroke-width="2" stroke-linecap="butt" stroke-linejoin="miter" />
<path d="M81.9 119.6V137.8M71.4 129.7H90" fill="none" stroke="#3b3b3b" stroke-width="2" stroke-linecap="butt" stroke-linejoin="miter" />
<path d="M178.5 113H157.6L168.4 125L157.6 137H178.5" fill="none" stroke="#3b3b3b" stroke-width="2" stroke-linecap="butt" stroke-linejoin="miter" />
<circle cx="243.1" cy="193.1" r="5.0" fill="none" stroke="#d5d5d5" stroke-width="1.9"/>
<circle cx="259.0" cy="208.85" r="5.0" fill="none" stroke="#d5d5d5" stroke-width="1.9"/>
<path d="M262.1 189.9L239.8 212.2" fill="none" stroke="#d5d5d5" stroke-width="1.9" stroke-linecap="butt" stroke-linejoin="miter" />
<path d="M305 185.1V216.8" fill="none" stroke="#d5d5d5" stroke-width="1.9" stroke-linecap="butt" stroke-linejoin="miter" />
<path d="M311 196.4C311 191.5 308.6 188.2 305 188.2C301.4 188.2 299 191 299 194.5C299 198.2 301.8 199.6 305 200.6C308.4 201.7 311 203.4 311 207.6C311 211.4 308.4 214 305 214C301.4 214 299.6 210.5 299.6 205.6" fill="none" stroke="#d5d5d5" stroke-width="1.9" stroke-linecap="butt" stroke-linejoin="miter" />
<path d="M329.6 189.4C328 188.5 326.6 188.2 325.2 188.2C320.6 188.2 317.7 193.6 317.7 201C317.7 208.4 320.6 213.8 325.2 213.8C326.6 213.8 328 213.5 329.6 212.6M314.1 197.9H321.8M314.1 201.9H321.8" fill="none" stroke="#d5d5d5" stroke-width="1.9" stroke-linecap="butt" stroke-linejoin="miter" />
<circle cx="363.9" cy="203.1" r="2.0" fill="#3b3b3b" stroke="#3b3b3b" stroke-width="0"/>
<rect x="370.90" y="188" width="7.8" height="16" rx="3.9" fill="none" stroke="#3b3b3b" stroke-width="2"/>
<path d="M385.00 199.1V192a4 4 0 0 1 8 0V200.7" fill="none" stroke="#3b3b3b" stroke-width="2" stroke-linecap="butt" stroke-linejoin="miter" />
<circle cx="386.9" cy="210" r="10.1" fill="#fff" stroke="#3b3b3b" stroke-width="0"/>
<circle cx="386.9" cy="210" r="8.9" fill="#117865" stroke="#3b3b3b" stroke-width="0"/>
<path d="M391.70 210H382.30M386.80 205.8L382.00 210L386.80 214.2" fill="none" stroke="#fff" stroke-width="2.2" stroke-linecap="butt" stroke-linejoin="miter" />
<circle cx="428.0" cy="203.1" r="2.0" fill="#3b3b3b" stroke="#3b3b3b" stroke-width="0"/>
<rect x="435.00" y="188" width="7.8" height="16" rx="3.9" fill="none" stroke="#3b3b3b" stroke-width="2"/>
<path d="M449.10 199.1V192a4 4 0 0 1 8 0V200.7" fill="none" stroke="#3b3b3b" stroke-width="2" stroke-linecap="butt" stroke-linejoin="miter" />
<circle cx="451.0" cy="210" r="10.1" fill="#fff" stroke="#3b3b3b" stroke-width="0"/>
<circle cx="451.0" cy="210" r="8.9" fill="#117865" stroke="#3b3b3b" stroke-width="0"/>
<path d="M446.20 210H455.60M451.10 205.8L455.90 210L451.10 214.2" fill="none" stroke="#fff" stroke-width="2.2" stroke-linecap="butt" stroke-linejoin="miter" />
<path d="M530.2 112H557.9M530.2 137.9H557.9" fill="none" stroke="#cfcfcf" stroke-width="2" stroke-linecap="butt" stroke-linejoin="miter" />
<rect x="539" y="120.4" width="9.9" height="9.4" fill="#f3faf8"/>
<path d="M539 120.3V129.9M548.9 120.3V129.9" fill="none" stroke="#bcdfd6" stroke-width="1.8" stroke-linecap="butt" stroke-linejoin="miter" />
<rect x="531.35" y="120.35" width="25.2" height="9.4" rx="3.6" fill="none" stroke="#cfcfcf" stroke-width="2.1"/>
<path d="M640.6 113.6H653.2a8 8 0 0 1 8 8V134.2" fill="none" stroke="#3b3b3b" stroke-width="2" stroke-linecap="butt" stroke-linejoin="miter" />
<path d="M645 109.8H655.3a10 10 0 0 1 10 10V130.4" fill="none" stroke="#3b3b3b" stroke-width="2" stroke-linecap="butt" stroke-linejoin="miter" />
<rect x="642" y="118.6" width="8" height="20.2" fill="#dff0eb"/>
<path d="M642 117.6V139.8M650 117.6V139.8" fill="none" stroke="#117865" stroke-width="2" stroke-linecap="butt" stroke-linejoin="miter" />
<rect x="635" y="117.6" width="22" height="22.2" rx="5.5" fill="none" stroke="#3b3b3b" stroke-width="2"/>
<path d="M760.4 111.8C758.6 109.8 755.2 109.6 753.6 112.4C752.4 114.6 752.5 117.5 752.4 121L751.7 133C751.4 137.6 749.4 140.6 744.1 138.9" fill="none" stroke="#3b3b3b" stroke-width="1.8" stroke-linecap="round" stroke-linejoin="miter" />
<path d="M747.2 120H758.4" fill="none" stroke="#3b3b3b" stroke-width="1.8" stroke-linecap="round" stroke-linejoin="miter" />
<path d="M757.7 125.2C759.3 123.2 761.5 123.4 762.7 125.6L767.6 135.6C768.8 138 770.9 138.4 772.5 136.7M772.4 123.8L757.7 138" fill="none" stroke="#117865" stroke-width="2.2" stroke-linecap="round" stroke-linejoin="miter" />
<path d="M944.1 116.8V112.2H963.8V116.8M953.95 112.2V137.9M949.4 137.9H958.5" fill="none" stroke="#242424" stroke-width="2" stroke-linecap="butt" stroke-linejoin="miter" />
<path d="M756.8 171.2L750.6 202.7M769.7 171.2L763.4 202.7M746.2 181.6H775.5M744.4 192H773.6" fill="none" stroke="#242424" stroke-width="2" stroke-linecap="butt" stroke-linejoin="miter" />
<path d="M951.15 177.8H970.80" fill="none" stroke="#1f1f1f" stroke-width="2.2" stroke-linecap="butt" stroke-linejoin="miter" />
<path d="M951.15 188.0H970.80" fill="none" stroke="#1f1f1f" stroke-width="2.2" stroke-linecap="butt" stroke-linejoin="miter" />
<path d="M951.15 198.2H970.80" fill="none" stroke="#1f1f1f" stroke-width="2.2" stroke-linecap="butt" stroke-linejoin="miter" />
<path d="M939.70 176.9L942.10 179.2L946.40 175" fill="none" stroke="#1f1f1f" stroke-width="2.4" stroke-linecap="butt" stroke-linejoin="miter" />
<path d="M939.70 197.9L942.10 200.2L946.40 196" fill="none" stroke="#1f1f1f" stroke-width="2.4" stroke-linecap="butt" stroke-linejoin="miter" />
<path d="M1256.25 177.8H1275.90" fill="none" stroke="#1f1f1f" stroke-width="2.2" stroke-linecap="butt" stroke-linejoin="miter" />
<path d="M1256.25 188.0H1275.90" fill="none" stroke="#1f1f1f" stroke-width="2.2" stroke-linecap="butt" stroke-linejoin="miter" />
<path d="M1256.25 198.2H1275.90" fill="none" stroke="#1f1f1f" stroke-width="2.2" stroke-linecap="butt" stroke-linejoin="miter" />
<path d="M1244.80 176.9L1247.20 179.2L1251.50 175" fill="none" stroke="#1f1f1f" stroke-width="2.4" stroke-linecap="butt" stroke-linejoin="miter" />
<path d="M1244.80 197.9L1247.20 200.2L1251.50 196" fill="none" stroke="#1f1f1f" stroke-width="2.4" stroke-linecap="butt" stroke-linejoin="miter" />
<circle cx="1090.6" cy="118.5" r="5.5" fill="none" stroke="#3b3b3b" stroke-width="2"/>
<circle cx="1106.0" cy="119.4" r="4.0" fill="none" stroke="#3b3b3b" stroke-width="2"/>
<path d="M1084 127.8H1096.5a2.9 2.9 0 0 1 2.9 2.9c0 4.7-3.9 7.2-9.15 7.2s-9.15-2.5-9.15-7.2a2.9 2.9 0 0 1 2.9-2.9Z" fill="none" stroke="#3b3b3b" stroke-width="2" stroke-linecap="butt" stroke-linejoin="miter" />
<path d="M1102.7 127.8H1110.2a2.7 2.7 0 0 1 2.7 2.7c0 2.9-2.6 4.4-6.4 4.4c-1.5 0-2.8-.2-3.8-.6" fill="none" stroke="#3b3b3b" stroke-width="2" stroke-linecap="butt" stroke-linejoin="miter" />
<rect x="1246" y="112.2" width="25.8" height="25.7" rx="5" fill="none" stroke="#3b3b3b" stroke-width="2"/>
<path d="M1252.4 125.6L1257.3 130.2L1265.8 121" fill="none" stroke="#117865" stroke-width="2.2" stroke-linecap="round" stroke-linejoin="round" />
<rect x="1084.2" y="174.1" width="25.6" height="25.6" rx="5" fill="none" stroke="#3b3b3b" stroke-width="2"/>
<path d="M1084.2 179.4H1109.8" fill="none" stroke="#3b3b3b" stroke-width="2" stroke-linecap="butt" stroke-linejoin="miter" />
<circle cx="1091" cy="186.9" r="1.9" fill="#3b3b3b" stroke="#3b3b3b" stroke-width="0"/>
<circle cx="1097.05" cy="186.9" r="1.9" fill="#3b3b3b" stroke="#3b3b3b" stroke-width="0"/>
<circle cx="1103.2" cy="186.9" r="1.9" fill="#3b3b3b" stroke="#3b3b3b" stroke-width="0"/>
<circle cx="1091" cy="192.9" r="1.9" fill="#3b3b3b" stroke="#3b3b3b" stroke-width="0"/>
<circle cx="1097.05" cy="192.9" r="1.9" fill="#3b3b3b" stroke="#3b3b3b" stroke-width="0"/>
<path d="M1489.4 113.2H1476.1a8 8 0 0 0-8 8V134.2" fill="none" stroke="#3b3b3b" stroke-width="2" stroke-linecap="butt" stroke-linejoin="miter" />
<path d="M1485 109.5H1474.6a10 10 0 0 0-10 10V130" fill="none" stroke="#3b3b3b" stroke-width="2" stroke-linecap="butt" stroke-linejoin="miter" />
<rect x="1480" y="117.4" width="8.3" height="22.5" fill="#dff0eb"/>
<path d="M1480 117.4V139.9M1488.3 117.4V139.9" fill="none" stroke="#117865" stroke-width="2" stroke-linecap="butt" stroke-linejoin="miter" />
<rect x="1473" y="117.4" width="21.4" height="22.5" rx="5.5" fill="none" stroke="#3b3b3b" stroke-width="2"/>
<circle cx="1501.1" cy="111.8" r="15" fill="#147a66" stroke="#3b3b3b" stroke-width="0"/>
<text x="1501.2" y="121.6" text-anchor="middle" font-family="Liberation Sans, sans-serif" font-size="22" fill="#fff" stroke="#fff" stroke-width="0.7">2</text>
<path d="M1615.1 109.2V139.5H1645.9" fill="none" stroke="#3b3b3b" stroke-width="2" stroke-linecap="butt" stroke-linejoin="miter" />
<path d="M1615.3 123L1623.6 119.3L1630.7 124.2L1641.3 115.9V139.5" fill="none" stroke="#117865" stroke-width="2" stroke-linecap="butt" stroke-linejoin="round" />
<path d="M1746.3 139.5a3 3 0 0 1-3-3V135.2a3 3 0 0 1 3-3H1752.8V128.2a2 2 0 0 1 2-2H1763.2V122.3a2 2 0 0 1 2-2H1769.8a3 3 0 0 1 3 3V136.5a3 3 0 0 1-3 3Z" fill="none" stroke="#3b3b3b" stroke-width="2" stroke-linecap="butt" stroke-linejoin="round" />
<path d="M1765 110.2H1772.4a1 1 0 0 1 .75 1.7L1769.4 115.9a1 1 0 0 1-1.45 0L1764.2 111.9a1 1 0 0 1 .8-1.7Z" fill="#117865" stroke="#117865" stroke-width="1.2" stroke-linecap="butt" stroke-linejoin="round" />
<path d="M1833.3 111.9H1856.7a1.2 1.2 0 0 1 .95 1.95L1848.7 126.4V135.3L1842.5 138.4V126.4L1832.4 113.85a1.2 1.2 0 0 1 .9-1.95Z" fill="none" stroke="#3b3b3b" stroke-width="2" stroke-linecap="butt" stroke-linejoin="round" />
<circle cx="1927.1" cy="121.7" r="9.7" fill="none" stroke="#3b3b3b" stroke-width="2"/>
<path d="M1934.2 128.8L1943.2 138" fill="none" stroke="#3b3b3b" stroke-width="2" stroke-linecap="round" stroke-linejoin="miter" />
<path d="M2067.4 134.3H2066.6C2063 134.3 2061.3 131.9 2061.3 129.3C2061.3 126.2 2063.7 124.2 2066.5 124.2C2066.7 118.6 2070.6 114.3 2076 114.3C2081.5 114.3 2085.2 118.6 2085.5 124.2C2088.5 124.3 2090.8 126.4 2090.8 129.3C2090.8 132 2088.8 134.3 2085.5 134.3H2084.8" fill="none" stroke="#c9c9c9" stroke-width="2" stroke-linecap="round" stroke-linejoin="miter" />
<path d="M2076 138.3V121.8M2069.4 128.2L2076 121.6L2082.6 128.2" fill="none" stroke="#b9ddd4" stroke-width="1.8" stroke-linecap="round" stroke-linejoin="round" />
<path d="M2204 126V132.5a5 5 0 0 0 5 5H2219.3L2230 127V117.5a5 5 0 0 0-5-5H2214" fill="none" stroke="#8c8c8c" stroke-width="2" stroke-linecap="butt" stroke-linejoin="miter" />
<path d="M2230 126.6H2224.4a5 5 0 0 0-5 5V137.5" fill="none" stroke="#8c8c8c" stroke-width="2" stroke-linecap="butt" stroke-linejoin="miter" />
<circle cx="2207.9" cy="116.1" r="10.4" fill="#fff" stroke="#3b3b3b" stroke-width="0"/>
<circle cx="2207.9" cy="116.1" r="8.9" fill="#6fae9f" stroke="#3b3b3b" stroke-width="0"/>
<path d="M2203.1 116.1H2212.7M2207.9 111.3V120.9" fill="none" stroke="#fff" stroke-width="2" stroke-linecap="butt" stroke-linejoin="miter" />
<path d="M2344.8 108.8L2345.4 108.9L2346.0 108.9L2346.5 109.1L2347.0 109.2L2347.6 109.4L2348.2 109.3L2348.6 109.9L2348.9 110.8L2349.1 111.9L2349.2 113.0L2349.2 114.0L2349.4 114.7L2349.6 115.1L2350.0 115.2L2350.3 115.4L2350.6 115.6L2350.9 115.8L2351.4 115.9L2352.1 115.6L2352.9 115.2L2354.0 114.7L2355.0 114.4L2355.9 114.2L2356.7 114.2L2356.8 114.8L2357.3 115.1L2357.7 115.5L2358.1 115.9L2358.4 116.4L2358.7 116.8L2359.0 117.3L2359.2 117.9L2359.4 118.4L2359.5 118.9L2359.6 119.5L2360.0 119.9L2359.7 120.6L2359.0 121.3L2358.2 122.0L2357.3 122.7L2356.5 123.2L2355.9 123.7L2355.7 124.1L2355.7 124.5L2355.8 124.8L2355.7 125.2L2355.7 125.6L2355.9 126.0L2356.5 126.5L2357.3 127.0L2358.2 127.7L2359.0 128.4L2359.7 129.1L2360.0 129.8L2359.6 130.2L2359.5 130.8L2359.4 131.3L2359.2 131.8L2359.0 132.4L2358.7 132.8L2358.4 133.3L2358.1 133.8L2357.7 134.2L2357.3 134.6L2356.8 134.9L2356.7 135.5L2355.9 135.5L2355.0 135.3L2354.0 135.0L2352.9 134.5L2352.1 134.1L2351.4 133.8L2350.9 133.9L2350.6 134.1L2350.3 134.3L2350.0 134.5L2349.6 134.6L2349.4 135.0L2349.2 135.7L2349.2 136.7L2349.1 137.8L2348.9 138.9L2348.6 139.8L2348.2 140.4L2347.6 140.3L2347.0 140.5L2346.5 140.6L2346.0 140.8L2345.4 140.8L2344.8 140.8L2344.3 140.8L2343.7 140.8L2343.2 140.6L2342.7 140.5L2342.1 140.3L2341.5 140.4L2341.1 139.8L2340.8 138.9L2340.6 137.8L2340.5 136.7L2340.5 135.7L2340.3 135.0L2340.1 134.6L2339.7 134.5L2339.4 134.3L2339.1 134.1L2338.8 133.9L2338.3 133.8L2337.6 134.1L2336.8 134.5L2335.7 135.0L2334.7 135.3L2333.8 135.5L2333.0 135.5L2332.9 134.9L2332.4 134.6L2332.0 134.2L2331.6 133.8L2331.3 133.3L2331.0 132.8L2330.7 132.4L2330.5 131.8L2330.3 131.3L2330.2 130.8L2330.1 130.2L2329.7 129.8L2330.0 129.1L2330.7 128.4L2331.5 127.7L2332.4 127.0L2333.2 126.5L2333.8 126.0L2334.0 125.6L2334.0 125.2L2333.9 124.8L2334.0 124.5L2334.0 124.1L2333.8 123.7L2333.2 123.2L2332.4 122.7L2331.5 122.0L2330.7 121.3L2330.0 120.6L2329.7 119.9L2330.1 119.5L2330.2 118.9L2330.3 118.4L2330.5 117.9L2330.7 117.3L2331.0 116.8L2331.3 116.4L2331.6 115.9L2332.0 115.5L2332.4 115.1L2332.9 114.8L2333.0 114.2L2333.8 114.2L2334.7 114.4L2335.7 114.7L2336.8 115.2L2337.6 115.6L2338.3 115.9L2338.8 115.8L2339.1 115.6L2339.4 115.4L2339.7 115.2L2340.1 115.1L2340.3 114.7L2340.5 114.0L2340.5 113.0L2340.6 111.9L2340.8 110.8L2341.1 109.9L2341.5 109.3L2342.1 109.4L2342.7 109.2L2343.2 109.1L2343.7 108.9L2344.3 108.9Z" fill="none" stroke="#3b3b3b" stroke-width="2" stroke-linecap="butt" stroke-linejoin="round" />
<circle cx="2344.9" cy="124.85" r="3.9" fill="none" stroke="#117865" stroke-width="2"/>
<path d="M2554.9 1327.9L2555.5 1327.9L2556.1 1328.0L2556.6 1328.1L2557.1 1328.3L2557.7 1328.5L2558.3 1328.3L2558.7 1329.0L2559.0 1329.9L2559.2 1331.0L2559.3 1332.1L2559.3 1333.0L2559.5 1333.8L2559.7 1334.1L2560.1 1334.3L2560.4 1334.5L2560.7 1334.7L2561.0 1334.9L2561.5 1334.9L2562.2 1334.7L2563.0 1334.2L2564.1 1333.8L2565.1 1333.4L2566.0 1333.2L2566.8 1333.3L2566.9 1333.8L2567.4 1334.2L2567.8 1334.6L2568.2 1335.0L2568.5 1335.4L2568.8 1335.9L2569.1 1336.4L2569.3 1336.9L2569.5 1337.4L2569.6 1338.0L2569.7 1338.5L2570.1 1339.0L2569.8 1339.7L2569.1 1340.4L2568.3 1341.1L2567.4 1341.7L2566.6 1342.3L2566.0 1342.7L2565.8 1343.1L2565.8 1343.5L2565.8 1343.9L2565.8 1344.3L2565.8 1344.7L2566.0 1345.1L2566.6 1345.5L2567.4 1346.1L2568.3 1346.7L2569.1 1347.4L2569.8 1348.1L2570.1 1348.8L2569.7 1349.3L2569.6 1349.8L2569.5 1350.4L2569.3 1350.9L2569.1 1351.4L2568.8 1351.9L2568.5 1352.4L2568.2 1352.8L2567.8 1353.2L2567.4 1353.6L2566.9 1354.0L2566.8 1354.5L2566.0 1354.6L2565.1 1354.4L2564.1 1354.0L2563.0 1353.6L2562.2 1353.1L2561.5 1352.9L2561.0 1352.9L2560.7 1353.1L2560.4 1353.3L2560.1 1353.5L2559.7 1353.7L2559.5 1354.0L2559.3 1354.8L2559.3 1355.7L2559.2 1356.8L2559.0 1357.9L2558.7 1358.8L2558.3 1359.5L2557.7 1359.3L2557.1 1359.5L2556.6 1359.7L2556.1 1359.8L2555.5 1359.9L2554.9 1359.9L2554.4 1359.9L2553.8 1359.8L2553.3 1359.7L2552.8 1359.5L2552.2 1359.3L2551.6 1359.5L2551.2 1358.8L2550.9 1357.9L2550.7 1356.8L2550.6 1355.7L2550.6 1354.8L2550.4 1354.0L2550.2 1353.7L2549.8 1353.5L2549.5 1353.3L2549.2 1353.1L2548.9 1352.9L2548.4 1352.9L2547.7 1353.1L2546.9 1353.6L2545.8 1354.0L2544.8 1354.4L2543.9 1354.6L2543.1 1354.5L2543.0 1354.0L2542.5 1353.6L2542.1 1353.2L2541.7 1352.8L2541.4 1352.4L2541.1 1351.9L2540.8 1351.4L2540.6 1350.9L2540.4 1350.4L2540.3 1349.8L2540.2 1349.3L2539.8 1348.8L2540.1 1348.1L2540.8 1347.4L2541.6 1346.7L2542.5 1346.1L2543.3 1345.5L2543.9 1345.1L2544.1 1344.7L2544.1 1344.3L2544.0 1343.9L2544.1 1343.5L2544.1 1343.1L2543.9 1342.7L2543.3 1342.3L2542.5 1341.7L2541.6 1341.1L2540.8 1340.4L2540.1 1339.7L2539.8 1339.0L2540.2 1338.5L2540.3 1338.0L2540.4 1337.4L2540.6 1336.9L2540.8 1336.4L2541.1 1335.9L2541.4 1335.4L2541.7 1335.0L2542.1 1334.6L2542.5 1334.2L2543.0 1333.8L2543.1 1333.3L2543.9 1333.2L2544.8 1333.4L2545.8 1333.8L2546.9 1334.2L2547.7 1334.7L2548.4 1334.9L2548.9 1334.9L2549.2 1334.7L2549.5 1334.5L2549.8 1334.3L2550.2 1334.1L2550.4 1333.8L2550.6 1333.0L2550.6 1332.1L2550.7 1331.0L2550.9 1329.9L2551.2 1329.0L2551.6 1328.3L2552.2 1328.5L2552.8 1328.3L2553.3 1328.1L2553.8 1328.0L2554.4 1327.9Z" fill="none" stroke="#3b3b3b" stroke-width="2" stroke-linecap="butt" stroke-linejoin="round" />
<circle cx="2554.9" cy="1343.9" r="4.0" fill="none" stroke="#117865" stroke-width="2"/>
<path d="M1811.1 38.5H1811.5a4.5 4.5 0 0 1 4.5 4.5V60.6a4.5 4.5 0 0 1-4.5 4.5H1811.1" fill="none" stroke="#3b3b3b" stroke-width="1.9" stroke-linecap="butt" stroke-linejoin="miter" />
<path d="M1824 65.1a4.1 4.1 0 0 1-4.1-4.1V43a4.5 4.5 0 0 1 4.5-4.5H1825.4a4.5 4.5 0 0 1 4.5 4.5V56.9" fill="none" stroke="#3b3b3b" stroke-width="1.9" stroke-linecap="butt" stroke-linejoin="miter" />
<path d="M1838.7 38.5H1838.4a4.4 4.4 0 0 0-4.4 4.4V52.8" fill="none" stroke="#3b3b3b" stroke-width="1.9" stroke-linecap="butt" stroke-linejoin="miter" />
<circle cx="1838.9" cy="56.4" r="4.5" fill="#117865" stroke="#3b3b3b" stroke-width="0"/>
<circle cx="1828.4" cy="66.4" r="3.1" fill="#117865" stroke="#3b3b3b" stroke-width="0"/>
<path d="M1835.80 53.14L1826.26 64.16L1830.54 68.64L1842.00 59.66Z" fill="#117865" stroke="#117865" stroke-width="0" stroke-linecap="butt" stroke-linejoin="miter" />
<path d="M2123 38.9H2141a7 7 0 0 1 7 7V58" fill="none" stroke="#66a899" stroke-width="2" stroke-linecap="round" stroke-linejoin="miter" />
<path d="M2122.4 43.5H2139a4.6 4.6 0 0 1 4.6 4.6V57.8a4.6 4.6 0 0 1-4.6 4.6H2131.4L2124.6 67V62.4H2122.4a4.6 4.6 0 0 1-4.6-4.6V48.1a4.6 4.6 0 0 1 4.6-4.6Z" fill="none" stroke="#868686" stroke-width="2.1" stroke-linecap="butt" stroke-linejoin="round" />
<path d="M2389.9 44.6L2393.8 40.7A4.5 4.5 0 0 1 2400.2 47.1L2396.3 51Z" fill="#117865" stroke="#117865" stroke-width="0" stroke-linecap="butt" stroke-linejoin="miter" />
<path d="M2374.6 59.9L2393.8 40.7A4.5 4.5 0 0 1 2400.2 47.1L2381 66.3L2372.2 68.7Z" fill="none" stroke="#3b3b3b" stroke-width="2" stroke-linecap="butt" stroke-linejoin="round" />
<circle cx="64.5" cy="1418.4" r="12.6" fill="none" stroke="#454545" stroke-width="3.8"/>
<circle cx="64.5" cy="1418.4" r="5.9" fill="none" stroke="#454545" stroke-width="3.6"/>
<path d="M64.5 1418.4L79 1404" fill="none" stroke="#ebebeb" stroke-width="4.6" stroke-linecap="butt" stroke-linejoin="miter" />
<path d="M64.9 1418L79.3 1403.6" fill="none" stroke="#454545" stroke-width="1.7" stroke-linecap="butt" stroke-linejoin="miter" />
<path d="M75 1402.6L78.3 1400.4L78.6 1404.2L82.4 1404.6L80.2 1407.9L75.6 1407.4Z" fill="#454545" stroke="#454545" stroke-width="0" stroke-linecap="butt" stroke-linejoin="miter" />
</svg>
</body></html>
